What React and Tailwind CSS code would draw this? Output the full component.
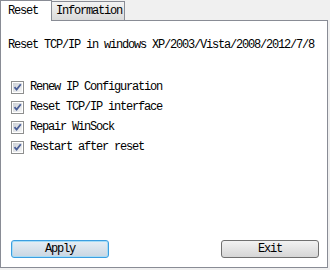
import React from "react";

const items = [
  "Renew IP Configuration",
  "Reset TCP/IP interface",
  "Repair WinSock",
  "Restart after reset",
];

function CheckBox() {
  return (
    <span className="flex h-[13px] w-[13px] items-center justify-center border border-[#8e8f8f] bg-white">
      <span className="flex h-[9px] w-[9px] items-center justify-center bg-gradient-to-br from-[#cbcfd5] to-[#f6f6f6]">
        <svg width="9" height="9" viewBox="0 0 9 9">
          <path
            d="M1.5 4.2 L3.6 6.6 L7.8 1.2"
            fill="none"
            stroke="#4a5f97"
            strokeWidth="1.8"
          />
        </svg>
      </span>
    </span>
  );
}

export default function App() {
  return (
    <div className="flex h-[270px] w-[330px] flex-col bg-[#f0f0f0] font-['Liberation_Mono',monospace] text-[12px] tracking-[-1.2px] text-black">
      <div className="relative z-10 flex h-[21px] items-end">
        <div className="flex h-[21px] w-[52px] items-start border-x border-t border-[#898c95] bg-white pl-[7px] pt-[3px] leading-[14px]">
          Reset
        </div>
        <div className="-ml-px mb-px flex h-[19px] w-[74px] items-start border-x border-t border-[#898c95] bg-gradient-to-b from-[#f3f3f3] to-[#dadada] pl-[4px] pt-[2px] leading-[14px]">
          Information
        </div>
      </div>
      <div className="-mt-px flex h-[248px] w-[328px] flex-col border border-[#898c95] bg-white">
        <div className="pl-[7px] pt-[17px] leading-[14px]">
          Reset TCP/IP in windows XP/2003/Vista/2008/2012/7/8
        </div>
        <div className="mt-[25px] flex flex-col pl-[10px]">
          {items.map((t) => (
            <div key={t} className="flex h-[20px] items-center gap-[6px] leading-[14px]">
              <CheckBox />
              <span>{t}</span>
            </div>
          ))}
        </div>
        <div className="mt-auto flex justify-between pb-[9px] pl-[10px] pr-[8px]">
          <button className="h-[18px] w-[98px] rounded-[3px] border border-[#3c9ee0] bg-gradient-to-b from-[#e6eef5] to-[#c9d6e2] leading-[14px] shadow-[inset_0_0_0_1px_#a6dcf6]">
            Apply
          </button>
          <button className="h-[18px] w-[98px] rounded-[3px] border border-[#707070] bg-gradient-to-b from-[#f2f2f2] to-[#d6d6d6] leading-[14px]">
            Exit
          </button>
        </div>
      </div>
    </div>
  );
}
